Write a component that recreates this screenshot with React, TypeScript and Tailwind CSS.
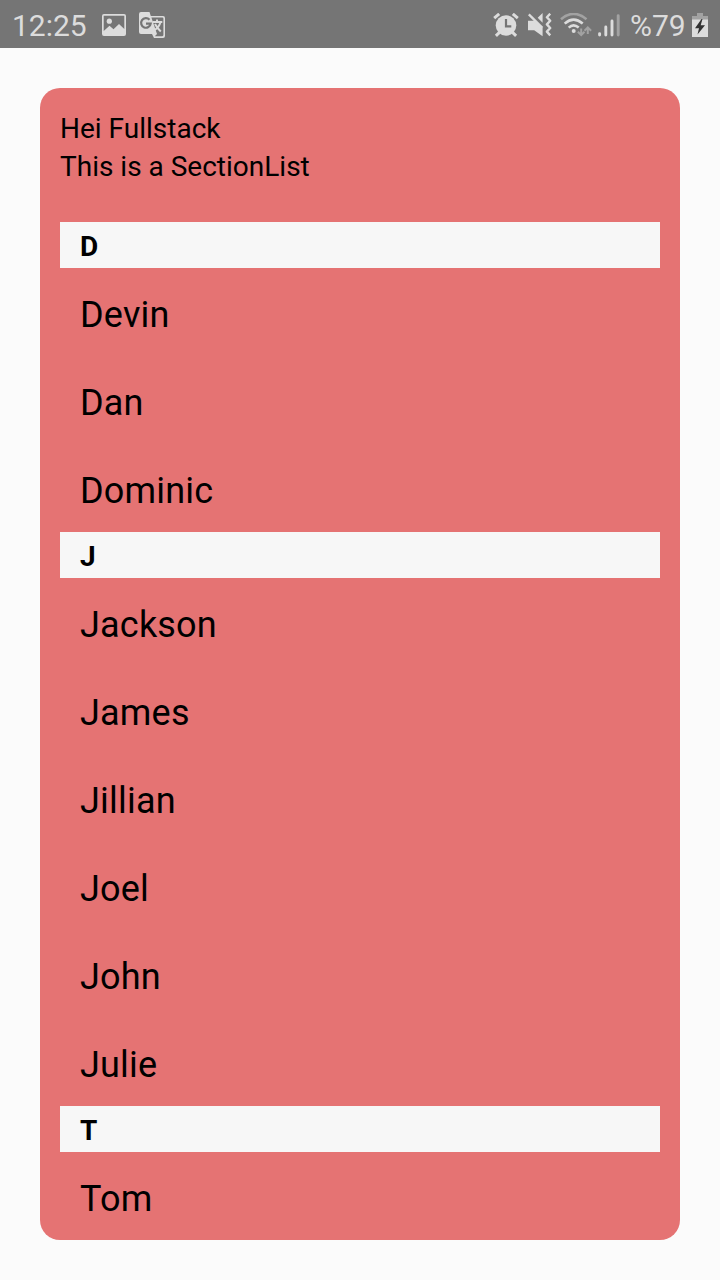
const sections = [
  { title: 'D', data: ['Devin', 'Dan', 'Dominic'] },
  { title: 'J', data: ['Jackson', 'James', 'Jillian', 'Joel', 'John', 'Julie'] },
  { title: 'T', data: ['Tom'] },
];

function PictureIcon() {
  return (
    <svg className="ml-[15px] h-[22px] w-6" viewBox="0 0 24 22" fill="#dcdcdc">
      <path
        fillRule="evenodd"
        d="M2 0H22Q24 0 24 2V20Q24 22 22 22H2Q0 22 0 20V2Q0 0 2 0ZM1.7 1.7V17L7.5 11.8L11.5 15.3L17 10L22.3 15V1.7Z"
      />
      <circle cx="7.3" cy="7.2" r="2.6" />
    </svg>
  );
}

function TranslateIcon() {
  return (
    <svg className="ml-[13px] h-[26px] w-[26px]" viewBox="0 0 26 26" fill="#dcdcdc">
      <path d="M2 0H10.5L11.8 4H24Q26 4 26 6V24Q26 26 24 26H15L13 22H2Q0 22 0 20V2Q0 0 2 0Z" />
      <path fill="#757575" d="M12.4 5.5H23.3Q24.4 5.5 24.4 6.6V23.1Q24.4 24.2 23.3 24.2H15.8L18 22Z" />
      <path
        fill="none"
        stroke="#757575"
        strokeWidth="2.2"
        d="M10.5 7.7A4.8 4.8 0 1 0 11.7 11.6H7"
      />
      <path
        fill="none"
        stroke="#dcdcdc"
        strokeWidth="2"
        d="M13.5 10H23.3M18 7.5V10M21.5 10Q20.2 15 15.7 18M16 12Q18.5 16.5 21.8 19.5"
      />
    </svg>
  );
}

function AlarmIcon() {
  return (
    <svg className="h-6 w-[26px]" viewBox="0 0 26 24">
      <circle cx="13" cy="12.5" r="10.3" fill="#dcdcdc" />
      <path
        fill="none"
        stroke="#dcdcdc"
        strokeWidth="3"
        d="M1.2 5.2L6.2 .9M19.8 .9L24.8 5.2M6.5 19.3L2.9 22.8M19.5 19.3L23.1 22.8"
      />
      <path fill="none" stroke="#757575" strokeWidth="2.2" d="M13 6V13.3H18.3" />
    </svg>
  );
}

function MuteIcon() {
  return (
    <svg className="ml-[9px] h-6 w-6" viewBox="0 0 24 24" fill="#dcdcdc">
      <path d="M0 7.7H7.5L14.6 15V23.3L6.2 17.3H0ZM14.6 0V9.7L9.7 4.8Z" />
      <path
        fill="none"
        stroke="#dcdcdc"
        strokeWidth="2.4"
        d="M.8 1.4L14.4 14.8"
      />
      <path
        fill="none"
        stroke="#dcdcdc"
        strokeWidth="2.4"
        strokeLinejoin="round"
        d="M22.2 .7L18.9 4.2L22.2 7.8L18.9 11.4L22.2 15L18.9 18.6L22.2 22.4"
      />
    </svg>
  );
}

function WifiIcon() {
  return (
    <svg className="ml-[8px] h-6 w-8" viewBox="0 0 32 24" fill="none">
      <path stroke="#a2a2a2" strokeWidth="2.6" d="M1 6.2Q13.5 -4.4 26.5 6.2" />
      <path stroke="#dcdcdc" strokeWidth="2.6" d="M4.7 10.6Q13.5 2.7 22.7 10.6M8.7 14.6Q13.5 10.3 18.7 14.6" />
      <circle cx="13.7" cy="18" r="2" fill="#dcdcdc" />
      <path stroke="#a2a2a2" strokeWidth="2" d="M21.2 15.5V22M17.9 18.8L21.2 22.1L24.5 18.8M27.8 21V14.5M24.5 17.8L27.8 14.4L31.1 17.8" />
    </svg>
  );
}

function SignalIcon() {
  return (
    <svg className="ml-[6px] h-6 w-[22px]" viewBox="0 0 22 24" strokeWidth="2.9" strokeLinecap="round">
      <path stroke="#dcdcdc" d="M1.6 20.6V22M7.8 14V22M14 8V22" />
      <path stroke="#a2a2a2" d="M20.2 2.8V22" />
    </svg>
  );
}

function BatteryIcon() {
  return (
    <svg className="ml-[6px] h-6 w-4" viewBox="0 0 16 24">
      <path fill="#a2a2a2" d="M5 0H11V3H16V7H0V3H5Z" />
      <path fill="#dcdcdc" d="M0 6.5H16V24H0Z" />
      <path fill="#333" d="M9.5 6L3 15.3H7L5.5 21.5L13 12.2H8.7L10.5 6Z" />
    </svg>
  );
}

function StatusBar() {
  return (
    <header className="flex h-12 items-center justify-between bg-[#757575] pt-0.5 pr-3 pl-3 text-[30px] leading-[44px] text-[#dcdcdc]">
      <div className="flex items-center">
        <span className="w-[75px] pt-0.5 whitespace-nowrap">12:25</span>
        <PictureIcon />
        <TranslateIcon />
      </div>
      <div className="flex items-center">
        <AlarmIcon />
        <MuteIcon />
        <WifiIcon />
        <SignalIcon />
        <span className="ml-[10px] w-14 pt-0.5 whitespace-nowrap">%79</span>
        <BatteryIcon />
      </div>
    </header>
  );
}

export default function App() {
  return (
    <div className="flex h-[1280px] w-[720px] flex-col overflow-hidden bg-[#fbfbfb] font-[Roboto,sans-serif] text-black">
      <StatusBar />
      <main className="m-10 flex-1 overflow-hidden rounded-[20px] bg-[#e57373] px-5">
        <div className="h-[134px] pt-[22px] text-[28px] leading-[38px]">
          <p>Hei Fullstack</p>
          <p>This is a SectionList</p>
        </div>
        {sections.map((section) => (
          <section key={section.title}>
            <h2 className="h-[46px] bg-[#f7f7f7] px-5 pt-[3px] text-[28px] leading-[44px] font-bold">
              {section.title}
            </h2>
            <ul>
              {section.data.map((name) => (
                <li key={name} className="h-[88px] px-5 pt-[23px] text-[36px] leading-[48px] tracking-[0.2px]">
                  {name}
                </li>
              ))}
            </ul>
          </section>
        ))}
      </main>
    </div>
  );
}
